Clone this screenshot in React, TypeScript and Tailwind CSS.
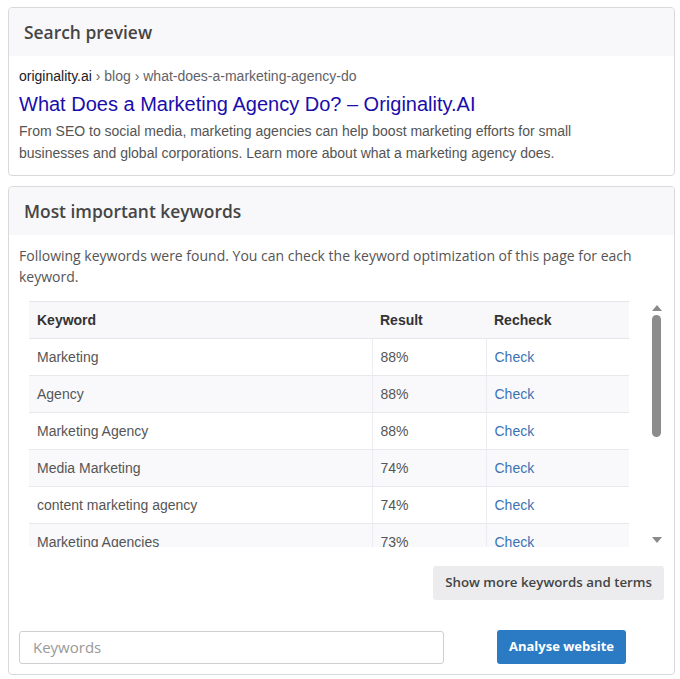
import React from "react";

const keywords = [
  { name: "Marketing", result: "88%" },
  { name: "Agency", result: "88%" },
  { name: "Marketing Agency", result: "88%" },
  { name: "Media Marketing", result: "74%" },
  { name: "content marketing agency", result: "74%" },
  { name: "Marketing Agencies", result: "73%" },
];

const Card = ({ title, children }: { title: string; children: React.ReactNode }) => (
  <div className="border border-[#d9d9dc] rounded-[4px] bg-white overflow-hidden">
    <div className="h-[48px] px-[15px] flex items-center bg-[#f8f7fa] font-['Open_Sans',sans-serif] font-semibold text-[17.4px] text-[#454545]">
      {title}
    </div>
    {children}
  </div>
);

const Scrollbar = () => (
  <div className="w-[15px] h-full flex flex-col items-center">
    <div className="h-[14px] flex items-center justify-center">
      <div className="w-0 h-0 border-l-[5px] border-r-[5px] border-b-[6px] border-l-transparent border-r-transparent border-b-[#8a8a8a]" />
    </div>
    <div className="w-[9px] h-[122px] rounded-full bg-[#8c8c8c]" />
    <div className="flex-1" />
    <div className="h-[14px] flex items-center justify-center">
      <div className="w-0 h-0 border-l-[5px] border-r-[5px] border-t-[6px] border-l-transparent border-r-transparent border-t-[#8a8a8a]" />
    </div>
  </div>
);

export default function App() {
  return (
    <div className="pl-[8px] pr-[5px] pt-[7px] flex flex-col gap-[10px] bg-white min-h-screen">
      <Card title="Search preview">
        <div className="px-[10px] pt-[10px] pb-[11px] font-['Liberation_Sans',Arial,sans-serif]">
          <div className="text-[14px] leading-[20px] text-[#5f6368]">
            <span className="text-[#202124]">originality.ai</span> › blog › what-does-a-marketing-agency-do
          </div>
          <div className="mt-[4px] text-[20px] leading-[28px] text-[#1a0dab]">
            What Does a Marketing Agency Do? – Originality.AI
          </div>
          <div className="mt-[2px] text-[14px] leading-[22px] text-[#545454] pr-[90px]">
            From SEO to social media, marketing agencies can help boost marketing efforts for small businesses and global corporations. Learn more about what a marketing agency does.
          </div>
        </div>
      </Card>

      <Card title="Most important keywords">
        <div className="px-[10px] pt-[10px] pb-[10px]">
          <p className="font-['Open_Sans',sans-serif] text-[14px] leading-[21px] text-[#555]">
            Following keywords were found. You can check the keyword optimization of this page for each keyword.
          </p>

          <div className="mt-[14px] ml-[10px] h-[246px] flex justify-between">
            <div className="w-[600px] h-full overflow-hidden">
              <table className="w-full border-collapse font-['Liberation_Sans',Arial,sans-serif] text-[14px]">
                <thead>
                  <tr className="bg-[#f8f7fa] border-t border-b border-[#e6e6ea] h-[37px] text-left text-[#333]">
                    <th className="w-[343px] pl-[8px] font-bold">Keyword</th>
                    <th className="w-[114px] pl-[8px] font-bold">Result</th>
                    <th className="pl-[8px] font-bold">Recheck</th>
                  </tr>
                </thead>
                <tbody>
                  {keywords.map((k, i) => (
                    <tr
                      key={k.name}
                      className={`h-[37px] border-b border-[#e8e8ec] ${i % 2 === 1 ? "bg-[#f9f9fb]" : "bg-white"}`}
                    >
                      <td className="pl-[8px] text-[#555] border-r border-[#ececf0]">{k.name}</td>
                      <td className="pl-[8px] text-[#555] border-r border-[#ececf0]">{k.result}</td>
                      <td className="pl-[8px] text-[#3b73b5]">Check</td>
                    </tr>
                  ))}
                </tbody>
              </table>
            </div>
            <Scrollbar />
          </div>

          <div className="mt-[19px] flex justify-end">
            <button className="h-[34px] px-[12px] rounded-[3px] bg-[#ececee] font-['Open_Sans',sans-serif] font-semibold text-[13.3px] text-[#444]">
              Show more keywords and terms
            </button>
          </div>

          <div className="mt-[30px] flex items-center">
            <input
              placeholder="Keywords"
              className="w-[425px] h-[33px] px-[13px] border border-[#cfcfd3] rounded-[3px] font-['Open_Sans',sans-serif] text-[15px] text-[#555] placeholder:text-[#999] outline-none"
            />
            <button className="ml-[53px] h-[34px] px-[12px] rounded-[3px] bg-[#2a7bc4] font-['Open_Sans',sans-serif] font-bold text-[13px] text-white">
              Analyse website
            </button>
          </div>
        </div>
      </Card>
    </div>
  );
}
